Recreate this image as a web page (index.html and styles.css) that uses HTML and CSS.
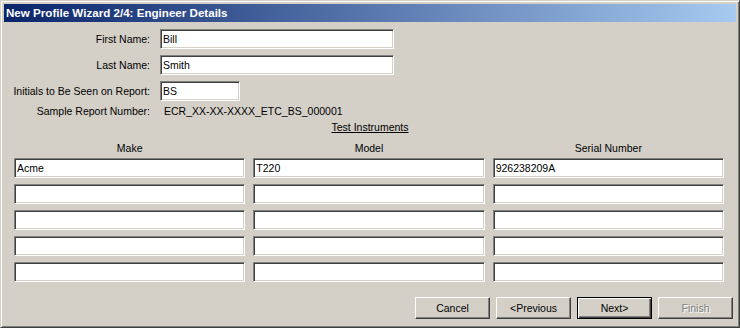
FILE: index.html
```html
<!DOCTYPE html>
<html lang="en">
<head>
    <meta charset="UTF-8">
    <title>New Profile Wizard</title>
    <link rel="stylesheet" href="styles.css">
</head>
<body>

<div class="window">
    <div class="titlebar">New Profile Wizard 2/4: Engineer Details</div>

    <div class="content">
        <div class="fields">
            <label for="first">First Name:</label>
            <input class="field name" id="first" type="text" value="Bill">

            <label for="last">Last Name:</label>
            <input class="field name" id="last" type="text" value="Smith">

            <label for="initials">Initials to Be Seen on Report:</label>
            <input class="field initials" id="initials" type="text" value="BS">

            <span class="sample">Sample Report Number:</span>
            <span class="sample value">ECR_XX-XX-XXXX_ETC_BS_000001</span>
        </div>

        <div class="section-title"><span>Test Instruments</span></div>

        <div class="instrument-heads">
            <div>Make</div>
            <div>Model</div>
            <div>Serial Number</div>
        </div>

        <div class="instruments">
            <input class="field" type="text" value="Acme">
            <input class="field" type="text" value="T220">
            <input class="field" type="text" value="926238209A">

            <input class="field" type="text">
            <input class="field" type="text">
            <input class="field" type="text">

            <input class="field" type="text">
            <input class="field" type="text">
            <input class="field" type="text">

            <input class="field" type="text">
            <input class="field" type="text">
            <input class="field" type="text">

            <input class="field" type="text">
            <input class="field" type="text">
            <input class="field" type="text">
        </div>

        <div class="buttons">
            <button class="btn">Cancel</button>
            <button class="btn">&lt;Previous</button>
            <button class="btn default">Next&gt;</button>
            <button class="btn" disabled>Finish</button>
        </div>
    </div>
</div>

</body>
</html>
```

FILE: styles.css
```css
body {
    margin: 0;
    padding: 0;
    background-color: #d4d0c8;
    font-family: "Liberation Sans", Arial, sans-serif;
    font-size: 10.5px;
    color: #000;
}
.window {
    width: 740px;
    height: 328px;
    box-sizing: border-box;
    background-color: #d4d0c8;
    border: 1px solid;
    border-color: #d4d0c8 #404040 #404040 #d4d0c8;
    box-shadow: inset 1px 1px #fff, inset -1px -1px #808080;
    padding: 3px;
}
.titlebar {
    height: 18px;
    line-height: 18px;
    padding-left: 2px;
    background: linear-gradient(to right, #0a246a, #a6caf0);
    color: #fff;
    font-weight: bold;
    font-size: 11.6px;
}
.content {
    padding-top: 7px;
}
.fields {
    display: grid;
    grid-template-columns: 146px auto;
    column-gap: 10px;
    row-gap: 6px;
    align-items: center;
}
.fields label, .fields .sample {
    text-align: right;
}
.fields .sample.value {
    text-align: left;
    padding-left: 4px;
}
.fields .sample {
    line-height: 14px;
    margin-top: -3px;
}
.field {
    box-sizing: border-box;
    height: 20px;
    margin: 0;
    padding: 0 2px;
    background-color: #fff;
    border: 1px solid;
    border-color: #808080 #fff #fff #808080;
    box-shadow: inset 1px 1px #404040, inset -1px -1px #d4d0c8;
    font-family: "Liberation Sans", Arial, sans-serif;
    font-size: 10.5px;
    color: #000;
    outline: none;
}
.field.name {
    width: 234px;
}
.field.initials {
    width: 80px;
}
.section-title {
    margin-top: 2px;
    line-height: 14px;
    text-align: center;
}
.section-title span {
    text-decoration: underline;
}
.instrument-heads, .instruments {
    display: grid;
    grid-template-columns: repeat(3, 1fr);
    column-gap: 8px;
    padding: 0 12px 0 10px;
}
.instrument-heads {
    margin-top: 7px;
    margin-bottom: 3px;
    line-height: 14px;
    text-align: center;
}
.instruments {
    row-gap: 6px;
}
.instruments .field {
    width: 100%;
}
.buttons {
    display: flex;
    justify-content: flex-end;
    gap: 6px;
    margin-top: 15px;
    padding-right: 3px;
}
.btn {
    box-sizing: border-box;
    width: 75px;
    height: 22px;
    margin: 0;
    padding: 0;
    background-color: #d4d0c8;
    border: 1px solid;
    border-color: #fff #404040 #404040 #fff;
    box-shadow: inset -1px -1px #808080;
    font-family: "Liberation Sans", Arial, sans-serif;
    font-size: 10.5px;
    color: #000;
}
.btn.default {
    border-color: #000;
    box-shadow: inset 1px 1px #fff, inset -1px -1px #404040, inset -2px -2px #808080;
}
.btn:disabled {
    color: #808080;
    text-shadow: 1px 1px #fff;
}
```
